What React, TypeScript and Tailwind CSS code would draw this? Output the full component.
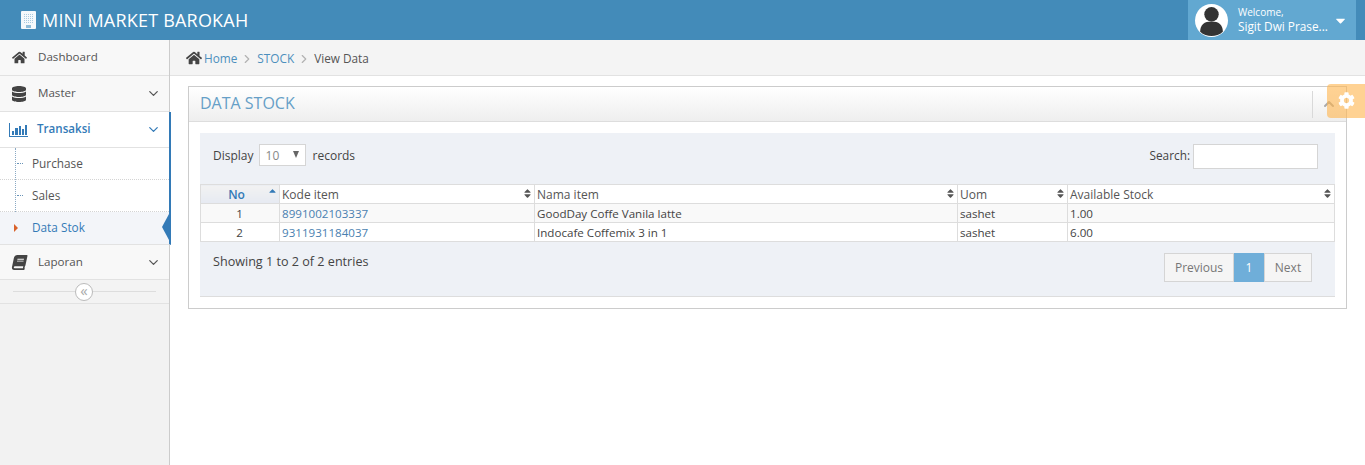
import { FaBook, FaCaretDown, FaCog, FaDatabase, FaHome, FaSort, FaSortUp } from "react-icons/fa";
import { FiChevronDown, FiChevronUp, FiChevronRight } from "react-icons/fi";

const rows = [
  { no: 1, code: "8991002103337", name: "GoodDay Coffe Vanila latte", uom: "sashet", stock: "1.00" },
  { no: 2, code: "9311931184037", name: "Indocafe Coffemix 3 in 1", uom: "sashet", stock: "6.00" },
];

function ChartIcon() {
  return (
    <svg width="19" height="14" viewBox="0 0 19 14" fill="#337ab7">
      <rect x="0" y="0" width="1" height="14" />
      <rect x="0" y="13" width="19" height="1" />
      <rect x="3" y="8" width="2" height="4" />
      <rect x="6" y="5" width="3" height="7" />
      <rect x="10" y="3" width="2" height="9" />
      <rect x="13" y="6" width="2" height="6" />
      <rect x="16" y="2" width="2" height="10" />
    </svg>
  );
}

function BuildingIcon() {
  const windows = [];
  for (let y = 3; y < 13; y += 2) {
    for (let x = 3; x < 13; x += 2) {
      windows.push(<rect key={`${x}-${y}`} x={x} y={y} width="1" height="1" fill="#a9cbe0" />);
    }
  }
  return (
    <svg width="15" height="18" viewBox="0 0 15 18">
      <rect x="0" y="0" width="15" height="18" rx="1" fill="#f4f9fc" />
      {windows}
      <rect x="5" y="14" width="5" height="3" fill="#8fbcd8" />
    </svg>
  );
}

function MenuItem({ icon, label, chevron = true, h = "h-[36px]", pad = "pb-[2px]" }: { icon: React.ReactNode; label: string; chevron?: boolean; h?: string; pad?: string }) {
  return (
    <div className={`${h} flex items-center border-b border-[#e2e2e2] bg-[#f8f8f8] pr-[8px] text-[11.6px] text-[#555]`}>
      <span className="flex w-[38px] justify-center text-[#444]">{icon}</span>
      <span className={`flex-1 ${pad}`}>{label}</span>
      {chevron && <FiChevronDown className="text-[15px] text-[#555]" />}
    </div>
  );
}

function SubItem({ label, active }: { label: string; active?: boolean }) {
  return (
    <div
      className={`relative flex h-[32px] items-center border-b border-dotted border-[#d4d4d4] pl-[32px] text-[11.8px] ${
        active ? "border-b-0 bg-[#f3f5f9] text-[#337ab7]" : "text-[#555]"
      }`}
    >
      {active ? (
        <span className="absolute left-[14px] top-[12px] h-0 w-0 border-y-[4px] border-l-[4px] border-y-transparent border-l-[#d9622b]" />
      ) : (
        <span className="absolute left-[17px] top-[15px] w-[6px] border-t border-dotted border-[#6a94b8]" />
      )}
      {label}
      {active && (
        <span className="absolute right-0 top-[2px] h-0 w-0 border-y-[13px] border-r-[7px] border-y-transparent border-r-[#337ab7]" />
      )}
    </div>
  );
}

function Th({ label, w }: { label: string; w: string }) {
  return (
    <th className={`${w} relative h-[19px] border border-[#dddddd] bg-white pl-[2px] pt-[2px] text-left align-middle text-[12px] font-normal leading-none text-[#555]`}>
      {label}
      <FaSort className="absolute right-[1px] top-[3px] text-[11px] text-[#555]" />
    </th>
  );
}

export default function App() {
  return (
    <div className="flex h-[465px] w-[1365px] flex-col overflow-hidden bg-white font-['Open_Sans',sans-serif] text-[13px] text-[#444]">
      {/* Top bar */}
      <header className="flex h-[40px] items-center bg-[#438bb9] text-white">
        <span className="ml-[21px]">
          <BuildingIcon />
        </span>
        <span className="ml-[6px] text-[18px] tracking-[0.2px]">MINI MARKET BAROKAH</span>
        <div className="ml-auto mr-[9px] flex h-[40px] w-[168px] items-center bg-[#62a8d1] pl-[7px]">
          <div className="h-[33px] w-[33px] overflow-hidden rounded-full bg-white">
            <svg width="33" height="33" viewBox="0 0 32 32" fill="#333">
              <circle cx="16" cy="10" r="7" />
              <path d="M5 27c0-7 4-10 11-10s11 3 11 10c-3 3-7 4-11 4s-8-1-11-4z" />
            </svg>
          </div>
          <div className="ml-[10px] w-[92px] leading-none">
            <div className="text-[10px] leading-[12px]">Welcome,</div>
            <div className="text-[11.8px] leading-[16px]">Sigit Dwi Prase...</div>
          </div>
          <FaCaretDown className="ml-[3px] text-[15px]" />
        </div>
      </header>

      <div className="flex flex-1">
        {/* Sidebar */}
        <aside className="relative w-[170px] border-r border-[#cccccc] bg-[#f2f2f2]">
          <MenuItem icon={<FaHome className="text-[15px]" />} label="Dashboard" chevron={false} />
          <MenuItem icon={<FaDatabase className="text-[16px]" />} label="Master" />
          <div className="relative mr-[-2px] border-b border-r-[2px] border-b-[#e2e2e2] border-r-[#337ab7] bg-white">
            <div className="flex h-[36px] items-center border-b border-[#e2e2e2] pr-[8px] text-[11.6px] font-semibold text-[#337ab7]">
              <span className="flex w-[37px] justify-center">
                <ChartIcon />
              </span>
              <span className="flex-1 pb-[2px]">Transaksi</span>
              <FiChevronDown className="text-[15px] text-[#337ab7]" />
            </div>
            <div className="relative">
              <span className="absolute bottom-0 left-[15px] top-0 border-l border-dotted border-[#8aa9c4]" />
              <SubItem label="Purchase" />
              <SubItem label="Sales" />
              <SubItem label="Data Stok" active />
            </div>
          </div>
          <MenuItem icon={<FaBook className="-skew-x-12 text-[15px]" />} label="Laporan" h="h-[35px]" pad="pb-0" />
          <div className="relative flex h-[24px] items-center border-b border-[#e2e2e2] bg-[#f3f3f3]">
            <div className="mx-[13px] h-[1px] flex-1 bg-[#dddddd]" />
            <span className="absolute left-[75px] top-[3px] flex h-[18px] w-[18px] items-center justify-center rounded-full border border-[#bbbbbb] bg-white pb-[3px] text-[15px] leading-none text-[#aaaaaa]">
              «
            </span>
          </div>
        </aside>

        {/* Main */}
        <main className="relative flex-1">
          <div className="flex h-[36px] items-center border-b border-[#e2e2e2] bg-[#f4f4f4] pl-[16px] text-[11.8px]">
            <FaHome className="text-[16px] text-[#444]" />
            <span className="ml-[2px] pt-[2px] text-[#4c8fbd]">Home</span>
            <FiChevronRight className="mx-[3px] mt-[2px] text-[14px] text-[#b2b2b2]" />
            <span className="pt-[2px] text-[#4c8fbd]">STOCK</span>
            <FiChevronRight className="mx-[3px] mt-[2px] text-[14px] text-[#b2b2b2]" />
            <span className="pt-[2px] text-[#555]">View Data</span>
          </div>

          <section className="ml-[18px] mr-[18px] mt-[10px] border border-[#cccccc]">
            <div className="flex h-[35px] items-center border-b border-[#dddddd] bg-gradient-to-b from-white to-[#eeeeee] pl-[11px]">
              <h2 className="pb-[2px] text-[16px] text-[#669fc7]">DATA STOCK</h2>
              <div className="ml-auto flex items-center">
                <span className="h-[27px] w-[1px] bg-[#d9d9d9]" />
                <FiChevronUp className="ml-[8px] mr-[9px] text-[16px] text-[#aaaaaa]" strokeWidth={3} />
              </div>
            </div>

            <div className="mx-[11px] mb-[11px] mt-[11px] border-b border-[#dddddd] bg-[#eef1f6]">
              <div className="flex h-[51px] items-start justify-between px-[13px] pt-[11px]">
                <div className="flex items-center text-[12px]">
                  <span className="pt-[1px]">Display</span>
                  <span className="relative ml-[5px] flex h-[22px] w-[47px] items-center border border-[#d5d5d5] bg-white pl-[6px] pt-[2px] text-[#888]">
                    10
                    <span className="absolute right-[6px] top-[6px] h-0 w-0 border-x-[3.5px] border-t-[7px] border-x-transparent border-t-[#666]" />
                  </span>
                  <span className="ml-[7px] pt-[1px]">records</span>
                </div>
                <div className="flex items-center text-[11.8px]">
                  <span className="pb-[2px]">Search:</span>
                  <span className="ml-[3px] mr-[4px] block h-[25px] w-[125px] border border-[#d5d5d5] bg-white" />
                </div>
              </div>

              <table className="w-full table-fixed border-collapse">
                <thead>
                  <tr>
                    <th className="relative h-[19px] w-[79px] border border-[#dddddd] bg-gradient-to-b from-[#f2f2f2] to-[#e6eaf2] pt-[2px] text-[12px] font-semibold leading-none text-[#337ab7]">
                      <span className="pr-[7px]">No</span>
                      <FaSortUp className="absolute right-[1px] top-[3px] text-[11px] text-[#337ab7]" />
                    </th>
                    <Th label="Kode item" w="w-[255px]" />
                    <Th label="Nama item" w="w-[423px]" />
                    <Th label="Uom" w="w-[110px]" />
                    <Th label="Available Stock" w="w-auto" />
                  </tr>
                </thead>
                <tbody className="text-[11.6px] leading-none">
                  {rows.map((r) => (
                    <tr key={r.no} className={r.no % 2 ? "bg-[#f9f9f9]" : "bg-white"}>
                      <td className="h-[19px] border border-[#dddddd] pr-[1px] pt-[1px] text-center">{r.no}</td>
                      <td className="border border-[#dddddd] pl-[2px] pt-[1px] text-[#4a7fb0]">{r.code}</td>
                      <td className="border border-[#dddddd] pl-[2px] pt-[1px]">{r.name}</td>
                      <td className="border border-[#dddddd] pl-[2px] pt-[1px]">{r.uom}</td>
                      <td className="border border-[#dddddd] pl-[2px] pt-[1px]">{r.stock}</td>
                    </tr>
                  ))}
                </tbody>
              </table>

              <div className="flex h-[54px] items-start justify-between px-[13px] pt-[11px]">
                <span className="text-[12.6px]">Showing 1 to 2 of 2 entries</span>
                <div className="mr-[10px] flex h-[29px] text-[12px]">
                  <span className="flex w-[70px] items-center justify-center border border-[#d5d5d5] bg-[#f5f5f5] text-[#777]">Previous</span>
                  <span className="flex w-[30px] items-center justify-center bg-[#6faed9] text-white">1</span>
                  <span className="flex w-[48px] items-center justify-center border border-[#d5d5d5] bg-[#f5f5f5] text-[#777]">Next</span>
                </div>
              </div>
            </div>
          </section>

          <div className="absolute right-0 top-[44px] flex h-[34px] w-[38px] items-center justify-end rounded-l-[4px] bg-[#ffb44b]/60 pb-[2px] pr-[10px]">
            <FaCog className="text-[17px] text-white" />
          </div>
        </main>
      </div>
    </div>
  );
}
